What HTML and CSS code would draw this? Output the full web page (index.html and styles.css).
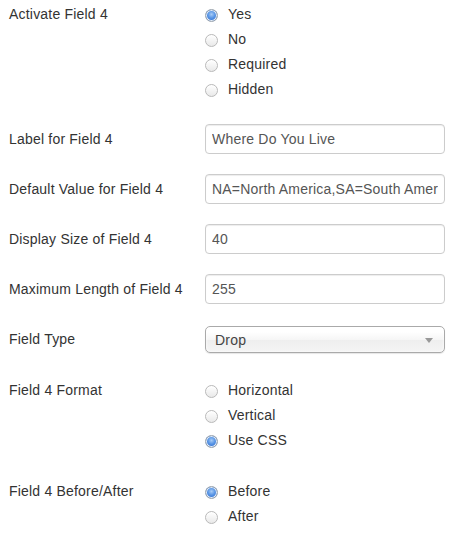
FILE: index.html
```html
<!DOCTYPE html>
<html>
<head>
<meta charset="utf-8">
<link rel="stylesheet" href="styles.css">
</head>
<body>
<form class="form">
  <div class="group radios">
    <div class="label label-radio">Activate Field 4</div>
    <div class="controls">
      <label class="opt"><input type="radio" name="act" checked><span>Yes</span></label>
      <label class="opt"><input type="radio" name="act"><span>No</span></label>
      <label class="opt"><input type="radio" name="act"><span>Required</span></label>
      <label class="opt"><input type="radio" name="act"><span>Hidden</span></label>
    </div>
  </div>
  <div class="group">
    <div class="label">Label for Field 4</div>
    <div class="controls"><input class="text" type="text" value="Where Do You Live"></div>
  </div>
  <div class="group">
    <div class="label">Default Value for Field 4</div>
    <div class="controls"><input class="text" type="text" value="NA=North America,SA=South America,EU=Europe"></div>
  </div>
  <div class="group">
    <div class="label">Display Size of Field 4</div>
    <div class="controls"><input class="text" type="text" value="40"></div>
  </div>
  <div class="group">
    <div class="label">Maximum Length of Field 4</div>
    <div class="controls"><input class="text" type="text" value="255"></div>
  </div>
  <div class="group before-radios">
    <div class="label">Field Type</div>
    <div class="controls">
      <div class="select"><span>Drop</span><i class="arrow"></i></div>
    </div>
  </div>
  <div class="group radios spaced">
    <div class="label label-radio">Field 4 Format</div>
    <div class="controls">
      <label class="opt"><input type="radio" name="fmt"><span>Horizontal</span></label>
      <label class="opt"><input type="radio" name="fmt"><span>Vertical</span></label>
      <label class="opt"><input type="radio" name="fmt" checked><span>Use CSS</span></label>
    </div>
  </div>
  <div class="group radios">
    <div class="label label-radio">Field 4 Before/After</div>
    <div class="controls">
      <label class="opt"><input type="radio" name="ba" checked><span>Before</span></label>
      <label class="opt"><input type="radio" name="ba"><span>After</span></label>
    </div>
  </div>
</form>
</body>
</html>
```
FILE: styles.css
```css
html, body {
  margin: 0;
  padding: 0;
  background: #fff;
}
body {
  font-family: "Liberation Sans", Arial, sans-serif;
  font-size: 14px;
  letter-spacing: 0.2px;
  color: #333;
}
.form {
  padding: 0 16px 0 9px;
}
.group {
  display: flex;
  align-items: flex-start;
  margin-bottom: 20px;
}
.group.radios {
  padding: 2px 0;
}
.group.before-radios {
  margin-bottom: 22px;
}
.group.spaced {
  margin-bottom: 22px;
}
.label {
  width: 196px;
  flex: none;
  line-height: 30px;
}
.label-radio {
  line-height: 25px;
}
.controls {
  display: flex;
  flex-direction: column;
}
.opt {
  display: flex;
  align-items: center;
  height: 25px;
  line-height: 25px;
}
.opt input {
  -webkit-appearance: none;
  appearance: none;
  width: 13px;
  height: 13px;
  margin: 1px 10px 0 0;
  border-radius: 50%;
  border: 1px solid #b9b9b9;
  background: linear-gradient(#ffffff, #e9e9e9);
  box-shadow: inset 0 1px 1px rgba(255,255,255,0.9);
  flex: none;
}
.opt input:checked {
  border-color: #9aa3ad;
  background: radial-gradient(circle at 50% 40%, #a8ccf6 0, #5b97e6 40%, #2f6fd0 80%);
  box-shadow: inset 0 0 0 1px #e4ecf6;
}
.text {
  box-sizing: border-box;
  width: 240px;
  height: 30px;
  padding: 4px 6px;
  margin: 0;
  border: 1px solid #ccc;
  border-radius: 4px;
  box-shadow: inset 0 1px 1px rgba(0,0,0,0.075);
  font-family: "Liberation Sans", Arial, sans-serif;
  font-size: 14px;
  letter-spacing: 0.2px;
  color: #555;
  background: #fff;
  outline: none;
}
.select {
  box-sizing: border-box;
  width: 240px;
  height: 27px;
  margin-top: 2px;
  border: 1px solid #aaa;
  border-radius: 5px;
  background: linear-gradient(#ffffff 20%, #f6f6f6 50%, #eeeeee 52%, #f4f4f4 100%);
  box-shadow: 0 0 3px #fff inset, 0 1px 1px rgba(0,0,0,0.1);
  display: flex;
  align-items: center;
  justify-content: space-between;
  padding: 0 11px 0 9px;
  color: #444;
}
.arrow {
  width: 0;
  height: 0;
  border-left: 4px solid transparent;
  border-right: 4px solid transparent;
  border-top: 5px solid #999;
  margin-top: 1px;
}
```
